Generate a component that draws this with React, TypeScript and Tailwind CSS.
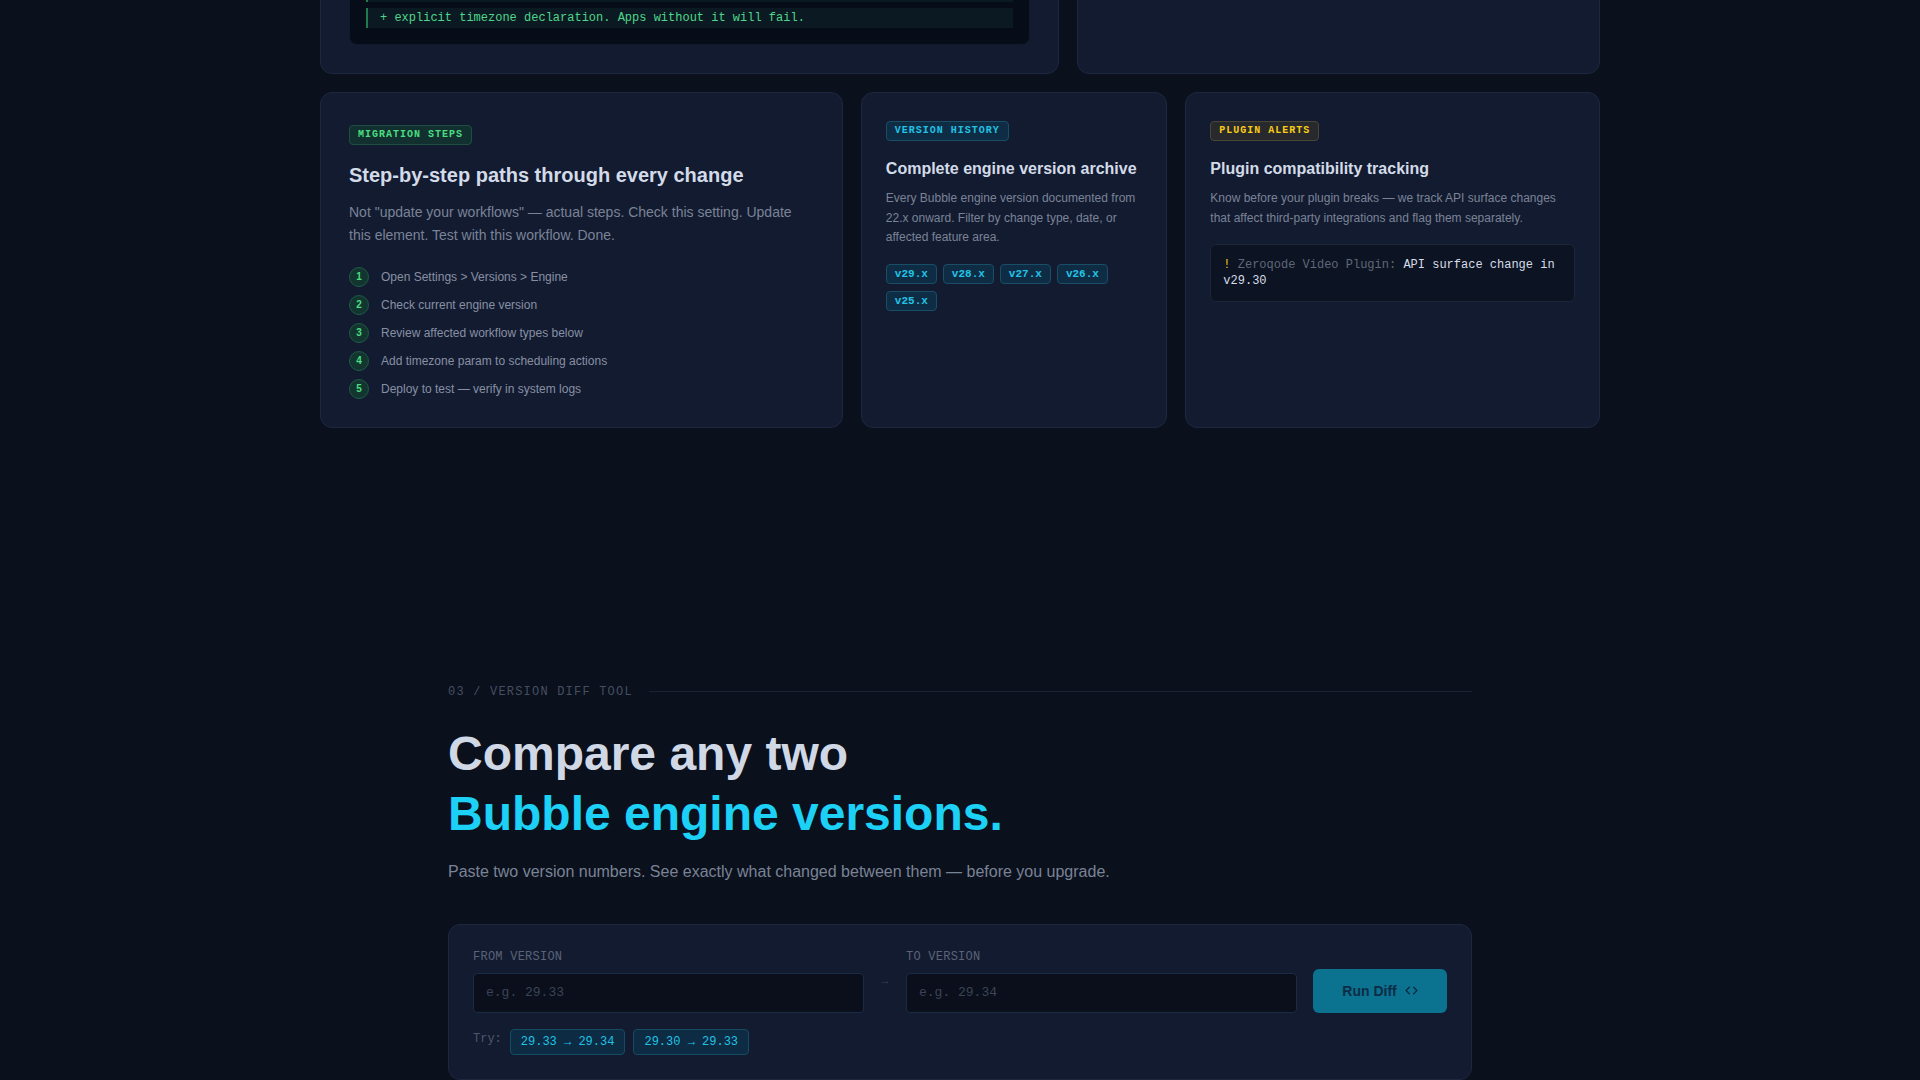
import React from "react";
import { Code } from "lucide-react";

const mono = "font-['Liberation_Mono','DejaVu_Sans_Mono',monospace]";

function Badge({ children, tone }: { children: React.ReactNode; tone: "green" | "cyan" | "yellow" }) {
  const cls =
    tone === "green"
      ? "bg-[#12302f] border-[#1f4f42] text-[#4ade80]"
      : tone === "cyan"
      ? "bg-[#0e2d44] border-[#1a4d66] text-[#22c3e6]"
      : "bg-[#27292c] border-[#4a4634] text-[#facc15]";
  return (
    <span
      className={`${mono} inline-flex self-start items-center rounded border px-2 py-0.5 text-[10px] leading-[14px] font-bold tracking-[0.1em] ${cls}`}
    >
      {children}
    </span>
  );
}

const steps = [
  "Open Settings > Versions > Engine",
  "Check current engine version",
  "Review affected workflow types below",
  "Add timezone param to scheduling actions",
  "Deploy to test \u2014 verify in system logs",
];

const versions = ["v29.x", "v28.x", "v27.x", "v26.x", "v25.x"];

export default function App() {
  return (
    <div className="min-h-screen overflow-hidden bg-[#0a101c] font-['Liberation_Sans',Arial,sans-serif]">
      <div className="mx-auto max-w-7xl -mt-[90px]">
        <div className="grid grid-cols-12 gap-[18px]">
          {/* top row */}
          <div className="col-span-7 rounded-xl border border-[#1d2740] bg-[#131b31] p-7">
            <div className="rounded-lg border border-[#111a2b] bg-[#070d18] p-4">
              <div className={`${mono} flex flex-col gap-1.5 text-xs leading-5`}>
                <div className="border-l-2 border-[#7a2a36] bg-[#1a1020] pl-3 text-[#f87171]">
                  - Scheduled workflows defaulted to server time.
                </div>
                <div className="border-l-2 border-[#1f7a4c] bg-[#0b1a22] pl-3 text-[#4ade80]">
                  + Scheduled API workflows now require an
                </div>
                <div className="border-l-2 border-[#1f7a4c] bg-[#0b1a22] pl-3 text-[#4fd68a]">
                  + explicit timezone declaration. Apps without it will fail.
                </div>
              </div>
            </div>
          </div>
          <div className="col-span-5 rounded-xl border border-[#1d2740] bg-[#131b31]" />

          {/* second row */}
          <div className="col-span-5 flex flex-col rounded-xl border border-[#1d2740] bg-[#131b31] px-7 pt-8 pb-7">
            <Badge tone="green">MIGRATION STEPS</Badge>
            <h3 className="mt-4 text-xl leading-7 font-bold text-[#d3dbe8]">
              Step-by-step paths through every change
            </h3>
            <p className="mt-3 max-w-md text-sm leading-relaxed text-[#7a8396]">
              Not "update your workflows" — actual steps. Check this setting. Update this element. Test with this workflow. Done.
            </p>
            <ul className="mt-5 flex flex-col gap-2">
              {steps.map((s, i) => (
                <li key={s} className="flex h-5 items-center gap-3">
                  <span className="flex h-5 w-5 shrink-0 items-center justify-center rounded-full border border-[#1e5a47] bg-[#133530] text-[10px] leading-none font-bold text-[#4ade80]">
                    {i + 1}
                  </span>
                  <span className="text-xs text-[#8790a3]">{s}</span>
                </li>
              ))}
            </ul>
          </div>

          <div className="col-span-3 flex flex-col rounded-xl border border-[#1d2740] bg-[#131b31] px-6 pt-7 pb-6">
            <Badge tone="cyan">VERSION HISTORY</Badge>
            <h3 className="mt-4 text-base leading-6 font-bold text-[#d3dbe8]">
              Complete engine version archive
            </h3>
            <p className="mt-2 text-xs leading-relaxed text-[#7a8396]">
              Every Bubble engine version documented from 22.x onward. Filter by change type, date, or affected feature area.
            </p>
            <div className="mt-4 flex flex-wrap gap-x-1.5 gap-y-[7px]">
              {versions.map((v) => (
                <span
                  key={v}
                  className={`${mono} rounded border border-[#1a4d66] bg-[#0e2d44] px-2 py-0.5 text-[11px] leading-[14px] font-bold text-[#22c3e6]`}
                >
                  {v}
                </span>
              ))}
            </div>
          </div>

          <div className="col-span-4 flex flex-col rounded-xl border border-[#1d2740] bg-[#131b31] px-6 pt-7 pb-6">
            <Badge tone="yellow">PLUGIN ALERTS</Badge>
            <h3 className="mt-4 text-base leading-6 font-bold text-[#d3dbe8]">
              Plugin compatibility tracking
            </h3>
            <p className="mt-2 text-xs leading-relaxed text-[#7a8396]">
              Know before your plugin breaks — we track API surface changes that affect third-party integrations and flag them separately.
            </p>
            <div className={`${mono} mt-4 rounded-md border border-[#1c2638] bg-[#0c1322] p-3 text-xs leading-4`}>
              <span className="text-[#facc15]">!</span>{" "}
              <span className="text-[#5f6879]">Zeroqode Video Plugin:</span>{" "}
              <span className="text-[#d6dce8]">API surface change in v29.30</span>
            </div>
          </div>
        </div>
      </div>

      <section className="mx-auto mt-64 max-w-5xl">
        <div className="flex items-center gap-4">
          <span className={`${mono} text-xs leading-4 tracking-[0.1em] text-[#464f61]`}>03 / VERSION DIFF TOOL</span>
          <div className="h-px flex-1 bg-[#1a2334]" />
        </div>
        <h2 className="mt-6 text-5xl leading-[60px] font-bold">
          <span className="block text-[#d0d8e6]">Compare any two</span>
          <span className="block text-[#1cd1f5]">Bubble engine versions.</span>
        </h2>
        <p className="mt-4 text-base leading-6 text-[#7a8396]">
          Paste two version numbers. See exactly what changed between them — before you upgrade.
        </p>

        <div className="mt-10 rounded-xl border border-[#1d2740] bg-[#131b31] p-6">
          <div className="flex items-end gap-4">
            <div className="flex flex-1 flex-col">
              <label className={`${mono} mb-2 text-xs leading-4 tracking-[0.02em] text-[#5a6377]`}>FROM VERSION</label>
              <input
                placeholder="e.g. 29.33"
                className={`${mono} h-10 rounded border border-[#1b2b44] bg-[#0a0f1b] px-3 text-[13px] text-[#d6dce8] placeholder:text-[#3b4457] outline-none`}
              />
            </div>
            <span className={`${mono} self-center w-2.5 text-center text-[11px] leading-4 text-[#3a4254]`}>→</span>
            <div className="flex flex-1 flex-col">
              <label className={`${mono} mb-2 text-xs leading-4 tracking-[0.02em] text-[#5a6377]`}>TO VERSION</label>
              <input
                placeholder="e.g. 29.34"
                className={`${mono} h-10 rounded border border-[#1b2b44] bg-[#0a0f1b] px-3 text-[13px] text-[#d6dce8] placeholder:text-[#3b4457] outline-none`}
              />
            </div>
            <button className="flex h-11 w-[134px] items-center justify-center gap-2 rounded-md bg-[#0b7290] text-sm font-bold text-[#0c2d45]">
              Run Diff
              <Code size={13} strokeWidth={2.5} />
            </button>
          </div>
          <div className="mt-4 flex items-start gap-2">
            <span className={`${mono} pt-0.5 text-xs leading-4 text-[#4e576a]`}>Try:</span>
            {["29.33 → 29.34", "29.30 → 29.33"].map((t) => (
              <span
                key={t}
                className={`${mono} rounded border border-[#174a63] bg-[#0d2b42] px-2.5 py-1 text-xs leading-4 text-[#22c3e6]`}
              >
                {t}
              </span>
            ))}
          </div>
        </div>
      </section>
    </div>
  );
}
